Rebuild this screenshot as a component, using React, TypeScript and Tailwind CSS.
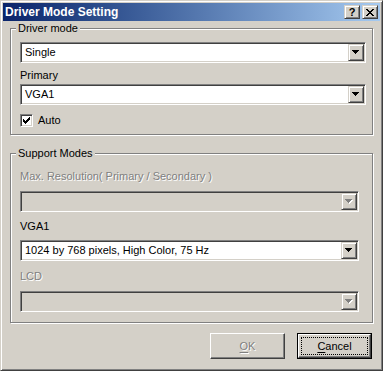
import React from 'react';

// classic 3d edges
const frameRaised =
  'border border-t-[#d4d0c8] border-l-[#d4d0c8] border-r-[#404040] border-b-[#404040] shadow-[inset_1px_1px_#ffffff,inset_-1px_-1px_#808080]';
const pushRaised =
  'border border-t-white border-l-white border-r-[#404040] border-b-[#404040] shadow-[inset_-1px_-1px_#808080]';
const sunken =
  'border border-t-[#808080] border-l-[#808080] border-r-white border-b-white shadow-[inset_1px_1px_#404040,inset_-1px_-1px_#d4d0c8]';
const etched = 'border border-[#808080] shadow-[inset_1px_1px_#ffffff,1px_1px_#ffffff]';
const disabledText = 'text-[#808080] [text-shadow:1px_1px_0_#ffffff]';

const Arrow: React.FC<{ disabled?: boolean }> = ({ disabled }) => (
  <svg width="8" height="5" viewBox="0 0 8 5" shapeRendering="crispEdges">
    {disabled && (
      <path d="M1 1h7v1H1z M2 2h5v1H2z M3 3h3v1H3z M4 4h1v1H4z" fill="#ffffff" />
    )}
    <path
      d="M0 0h7v1H0z M1 1h5v1H1z M2 2h3v1H2z M3 3h1v1H3z"
      fill={disabled ? '#808080' : '#000000'}
    />
  </svg>
);

const Combo: React.FC<{ value?: string; disabled?: boolean; className?: string }> = ({
  value = '',
  disabled,
  className = '',
}) => (
  <div className={`${sunken} h-[21px] p-[1px] flex ${className}`}>
    <div
      className={`flex-1 flex items-center pl-[3px] ${disabled ? 'bg-[#d4d0c8]' : 'bg-white'}`}
    >
      {value}
    </div>
    <div className={`w-[16px] ${frameRaised} bg-[#d4d0c8] flex items-center justify-center`}>
      <Arrow disabled={disabled} />
    </div>
  </div>
);

const Legend: React.FC<{ children: React.ReactNode }> = ({ children }) => (
  <span className="-mt-[7px] -ml-[4px] self-start bg-[#d4d0c8] px-[2px] leading-[13px]">
    {children}
  </span>
);

export default function App() {
  return (
    <div className="w-[383px] h-[371px] bg-[#d4d0c8] font-['Liberation_Sans',Arial,sans-serif] text-[11px] leading-[13px] text-black">
      <div className={`w-full h-full ${frameRaised} p-[2px] flex flex-col`}>
        {/* Title bar */}
        <div className="h-[18px] flex items-center bg-linear-to-r from-[#0a246a] to-[#a6caf0] pl-[2px] pr-[2px]">
          <span className="flex-1 text-white font-bold text-[12px] leading-[14px]">
            Driver Mode Setting
          </span>
          <div className={`w-[16px] h-[14px] ${frameRaised} bg-[#d4d0c8] flex items-center justify-center`}>
            <span className="font-bold text-[11px] leading-[11px] mt-[1px]">?</span>
          </div>
          <div className={`w-[16px] h-[14px] ml-[2px] ${frameRaised} bg-[#d4d0c8] flex items-center justify-center`}>
            <svg width="8" height="7" viewBox="0 0 8 7" shapeRendering="crispEdges">
              <path
                d="M0 0h2v1H0z M6 0h2v1H6z M1 1h2v1H1z M5 1h2v1H5z M2 2h4v1H2z M3 3h2v1H3z M2 4h4v1H2z M1 5h2v1H1z M5 5h2v1H5z M0 6h2v1H0z M6 6h2v1H6z"
                fill="#000000"
              />
            </svg>
          </div>
        </div>

        <div className="mx-[7px] flex flex-col">
          {/* Driver mode */}
          <div className={`mt-[7px] h-[107px] ${etched} flex flex-col pl-[9px] pr-[6px]`}>
            <Legend>Driver mode</Legend>
            <Combo value="Single" className="mt-[7px]" />
            <span className="mt-[6px]">Primary</span>
            <Combo value="VGA1" className="mt-[2px]" />
            <div className="mt-[9px] flex items-center">
              <div className={`w-[13px] h-[13px] ${sunken} bg-white p-[2px]`}>
                <svg width="7" height="7" viewBox="0 0 7 7" shapeRendering="crispEdges" className="block">
                  <path
                    d="M6 0h1v1H6z M5 1h2v1H5z M0 2h1v1H0z M4 2h3v1H4z M0 3h2v1H0z M3 3h3v1H3z M0 4h5v1H0z M1 5h3v1H1z M2 6h1v1H2z"
                    fill="#000000"
                  />
                </svg>
              </div>
              <span className="ml-[5px]">Auto</span>
            </div>
          </div>

          {/* Support Modes */}
          <div className={`mt-[18px] h-[170px] ${etched} flex flex-col pl-[9px] pr-[13px]`}>
            <Legend>Support Modes</Legend>
            <span className={`mt-[10px] ${disabledText}`}>Max. Resolution( Primary / Secondary )</span>
            <Combo disabled className="mt-[8px]" />
            <span className="mt-[8px]">VGA1</span>
            <Combo value="1024 by 768 pixels, High Color, 75 Hz" className="mt-[7px]" />
            <span className={`mt-[9px] ${disabledText}`}>LCD</span>
            <Combo disabled className="mt-[8px]" />
          </div>

          {/* Buttons */}
          <div className="mt-[10px] flex justify-end gap-[12px] pr-[1px]">
            <div className={`w-[75px] h-[26px] ${pushRaised} flex items-center justify-center`}>
              <span className={disabledText}>
                <span className="underline underline-offset-[2px]">O</span>K
              </span>
            </div>
            <div className="w-[75px] h-[26px] border border-black flex">
              <div className={`flex-1 ${pushRaised} p-[2px] flex`}>
                <div className="flex-1 border border-dotted border-black flex items-center justify-center">
                  <span>
                    <span className="underline underline-offset-[2px]">C</span>ancel
                  </span>
                </div>
              </div>
            </div>
          </div>
        </div>
      </div>
    </div>
  );
}
